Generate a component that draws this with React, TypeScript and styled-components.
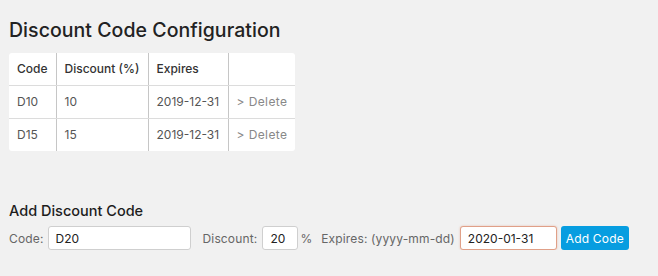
import React, { useEffect, useRef } from "react";
import styled, { createGlobalStyle } from "styled-components";

const Global = createGlobalStyle`
  html, body { margin: 0; padding: 0; background: #f1f1f1; }
  body { font-family: Inter, "Noto Sans", sans-serif; color: #444; }
  * { box-sizing: border-box; }
`;

const Page = styled.div`
  padding: 16px 9px 0 9px;
`;

const Title = styled.h1`
  margin: 0 0 9px 0;
  font-size: 19.5px;
  font-weight: 500;
  color: #222;
  line-height: 28px;
  letter-spacing: 0.05px;
`;

const Table = styled.table`
  background: #fff;
  border-collapse: collapse;
  border-radius: 3px;
  overflow: hidden;
  font-size: 12px;
  color: #555;
`;

const Th = styled.th<{ $w: number }>`
  width: ${(p) => p.$w}px;
  text-align: left;
  font-weight: 500;
  color: #333;
  height: 32px;
  padding: 0 8px;
  border-left: 1px solid #c6c6c6;
  border-bottom: 1px solid #dcdcdc;
  &:first-child { border-left: none; }
`;

const Td = styled.td<{ $muted?: boolean }>`
  height: 33px;
  padding: 0 8px;
  white-space: nowrap;
  border-left: 1px solid #c6c6c6;
  border-bottom: 1px solid #dcdcdc;
  color: ${(p) => (p.$muted ? "#888" : "#555")};
  letter-spacing: ${(p) => (p.$muted ? "0.4px" : "0")};
  &:first-child { border-left: none; }
  tr:last-child & { border-bottom: none; }
`;

const Section = styled.div`
  margin-top: 51px;
`;

const SubTitle = styled.h2`
  margin: 0 0 6px 0;
  font-size: 14.5px;
  font-weight: 500;
  color: #1d1d1d;
  line-height: 18px;
`;

const Row = styled.form`
  display: flex;
  align-items: center;
  font-size: 12px;
  color: #666;
`;

const Label = styled.label<{ $ml?: number; $mr?: number }>`
  margin-left: ${(p) => p.$ml ?? 0}px;
  margin-right: ${(p) => p.$mr ?? 5}px;
  letter-spacing: 0.15px;
`;

const Input = styled.input<{ $w: number; $focus?: boolean }>`
  width: ${(p) => p.$w}px;
  height: 24px;
  border: 1px solid ${(p) => (p.$focus ? "#e0a088" : "#cfcfcf")};
  box-shadow: ${(p) => (p.$focus ? "0 0 2px rgba(224,150,120,0.6)" : "none")};
  border-radius: 3px;
  padding: 0 7px;
  font-family: Inter, "Noto Sans", sans-serif;
  font-size: 12px;
  color: #222;
  background: #fff;
  outline: none;
  caret-color: #000;
`;

const Suffix = styled.span`
  margin-left: 2px;
`;

const Button = styled.button`
  margin-left: 4px;
  height: 24px;
  width: 68px;
  border: none;
  border-radius: 3px;
  background: #079de0;
  color: #fff;
  font-family: Inter, "Noto Sans", sans-serif;
  font-size: 12px;
  letter-spacing: 0.2px;
  padding: 0;
`;

const codes = [
  { code: "D10", discount: 10, expires: "2019-12-31" },
  { code: "D15", discount: 15, expires: "2019-12-31" },
];

export default function App() {
  const expiresRef = useRef<HTMLInputElement>(null);
  useEffect(() => {
    const el = expiresRef.current;
    if (el) {
      el.focus();
      const n = el.value.length;
      el.setSelectionRange(n, n);
    }
  }, []);
  return (
    <Page>
      <Global />
      <Title>Discount Code Configuration</Title>
      <Table>
        <thead>
          <tr>
            <Th $w={47}>Code</Th>
            <Th $w={92}>Discount (%)</Th>
            <Th $w={80}>Expires</Th>
            <Th $w={67}></Th>
          </tr>
        </thead>
        <tbody>
          {codes.map((c) => (
            <tr key={c.code}>
              <Td>{c.code}</Td>
              <Td>{c.discount}</Td>
              <Td>{c.expires}</Td>
              <Td $muted>&gt; Delete</Td>
            </tr>
          ))}
        </tbody>
      </Table>
      <Section>
        <SubTitle>Add Discount Code</SubTitle>
        <Row onSubmit={(e) => e.preventDefault()}>
          <Label $mr={4}>Code:</Label>
          <Input $w={143} defaultValue="D20" />
          <Label $ml={12}>Discount:</Label>
          <Input $w={36} defaultValue="20" />
          <Suffix>%</Suffix>
          <Label $ml={9}>Expires: (yyyy-mm-dd)</Label>
          <Input ref={expiresRef} $w={97} $focus defaultValue="2020-01-31" />
          <Button type="submit">Add Code</Button>
        </Row>
      </Section>
    </Page>
  );
}
